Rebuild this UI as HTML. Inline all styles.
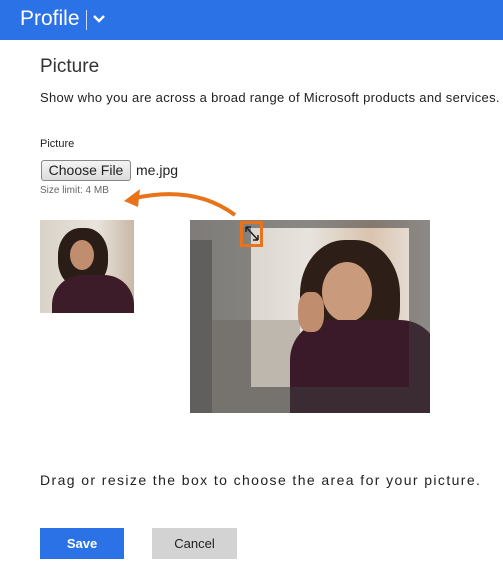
<!DOCTYPE html>
<html><head><style>
body{margin:0;width:503px;height:568px;background:#fff;font-family:"Liberation Sans",sans-serif;position:relative;overflow:hidden;color:#222}
.abs{position:absolute;white-space:nowrap}
</style></head><body>
<div class="abs" style="left:0;top:0;width:503px;height:40px;background:#2b72e6"></div>
<div class="abs" style="left:20px;top:7px;font-size:21px;color:#fff">Profile</div>
<div class="abs" style="left:86px;top:10px;width:1px;height:20px;background:#cfe0fb"></div>
<svg class="abs" style="left:93px;top:14px" width="12" height="10"><path d="M1 2 L6 7 L11 2" stroke="#fff" stroke-width="2.4" fill="none"/></svg>
<div class="abs" style="left:40px;top:56px;font-size:19px;color:#333">Picture</div>
<div class="abs" style="left:40px;top:90px;font-size:13px;letter-spacing:0.3px">Show who you are across a broad range of Microsoft products and services.</div>
<div class="abs" style="left:40px;top:138px;font-size:11px">Picture</div>
<div class="abs" style="left:41px;top:160px;width:88px;height:19px;border:1px solid #888;border-radius:3px;background:linear-gradient(#f4f4f4,#dcdcdc);font-size:14px;text-align:center;line-height:19px">Choose File</div>
<div class="abs" style="left:136px;top:162px;font-size:14px">me.jpg</div>
<div class="abs" style="left:40px;top:185px;font-size:10px;color:#666">Size limit: 4 MB</div>

<svg class="abs" style="left:110px;top:185px" width="140" height="40"><path d="M125 30 Q85 0 25 13" stroke="#e8731a" stroke-width="4" fill="none"/><path d="M14 16 L30 4 L28 22 Z" fill="#e8731a"/></svg>

<div class="abs" style="left:40px;top:220px;width:94px;height:93px;overflow:hidden;background:linear-gradient(90deg,#d8d2c8,#e9e4dc 60%,#c9b8a5)">
<div class="abs" style="left:18px;top:8px;width:50px;height:60px;border-radius:45%;background:#2a1d18"></div>
<div class="abs" style="left:30px;top:20px;width:24px;height:30px;border-radius:50%;background:#c08e6e"></div>
<div class="abs" style="left:12px;top:55px;width:82px;height:50px;border-radius:30px 30px 0 0;background:#3d1c2a"></div>
</div>

<div class="abs" style="left:190px;top:220px;width:240px;height:193px;overflow:hidden;background:linear-gradient(90deg,#cfcac2,#e7e3dd 50%,#d9c3ae 75%,#ece8e2)">
<div class="abs" style="left:0;top:100px;width:110px;height:93px;background:#bdb7ae"></div>
<div class="abs" style="left:0;top:20px;width:22px;height:173px;background:#8d8a86"></div>
<div class="abs" style="left:110px;top:20px;width:100px;height:120px;border-radius:45%;background:#2d1e18"></div>
<div class="abs" style="left:132px;top:42px;width:50px;height:60px;border-radius:50%;background:#c99a7c"></div>
<div class="abs" style="left:100px;top:100px;width:150px;height:110px;border-radius:40px 40px 0 0;background:#3a1a28"></div>
<div class="abs" style="left:108px;top:72px;width:26px;height:40px;border-radius:40%;background:#c08e6e"></div>
<div class="abs" style="left:0;top:0;width:61px;height:193px;background:rgba(60,60,60,.55)"></div>
<div class="abs" style="left:219px;top:0;width:21px;height:193px;background:rgba(60,60,60,.55)"></div>
<div class="abs" style="left:61px;top:0;width:158px;height:8px;background:rgba(60,60,60,.55)"></div>
<div class="abs" style="left:61px;top:167px;width:158px;height:26px;background:rgba(60,60,60,.55)"></div>
</div>
<div class="abs" style="left:240px;top:221px;width:23px;height:26px;border:3px solid #e8731a;box-sizing:border-box"></div>
<svg class="abs" style="left:243px;top:224px" width="18" height="20"><path d="M3 3 L15 16 M3 3 L3 8 M3 3 L8 3 M15 16 L15 11 M15 16 L10 16" stroke="#222" stroke-width="1.5" fill="none"/></svg>

<div class="abs" style="left:40px;top:472px;font-size:14px;letter-spacing:1.4px">Drag or resize the box to choose the area for your picture.</div>
<div class="abs" style="left:40px;top:528px;width:84px;height:31px;background:#2b72e6;color:#fff;font-size:13px;font-weight:bold;text-align:center;line-height:31px">Save</div>
<div class="abs" style="left:152px;top:528px;width:85px;height:31px;background:#d3d3d3;color:#222;font-size:13px;text-align:center;line-height:31px">Cancel</div>
</body></html>
